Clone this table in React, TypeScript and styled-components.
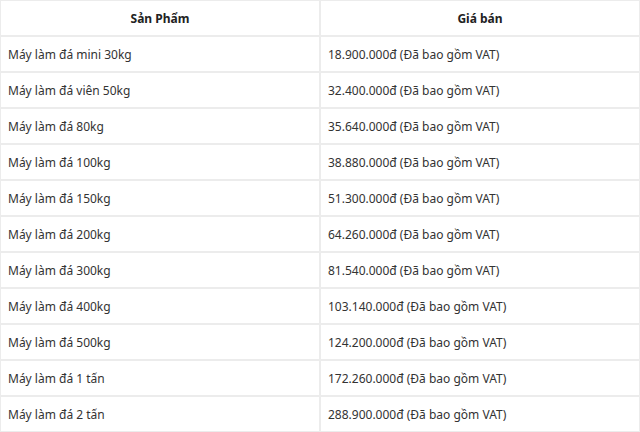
import React from "react";
import styled, { createGlobalStyle } from "styled-components";

const Global = createGlobalStyle`
  html, body { margin: 0; padding: 0; background: #fff; }
  body { font-family: "Noto Sans", "Open Sans", sans-serif; color: #333; overflow: hidden; }
`;

const Table = styled.table`
  width: 642px;
  margin: -1px 0 0 -1px;
  table-layout: fixed;
  border-collapse: collapse;
  font-size: 12px;
`;

const Th = styled.th`
  border: 2px solid #ececec;
  height: 34px;
  padding: 0 7px;
  font-weight: 700;
  text-align: center;
  color: #222;
  vertical-align: middle;
`;

const Td = styled.td`
  border: 2px solid #ececec;
  height: 34px;
  padding: 0 7px;
  text-align: left;
  vertical-align: middle;
`;

const rows: [string, string][] = [
  ["Máy làm đá mini 30kg", "18.900.000đ (Đã bao gồm VAT)"],
  ["Máy làm đá viên 50kg", "32.400.000đ (Đã bao gồm VAT)"],
  ["Máy làm đá 80kg", "35.640.000đ (Đã bao gồm VAT)"],
  ["Máy làm đá 100kg", "38.880.000đ (Đã bao gồm VAT)"],
  ["Máy làm đá 150kg", "51.300.000đ (Đã bao gồm VAT)"],
  ["Máy làm đá 200kg", "64.260.000đ (Đã bao gồm VAT)"],
  ["Máy làm đá 300kg", "81.540.000đ (Đã bao gồm VAT)"],
  ["Máy làm đá 400kg", "103.140.000đ (Đã bao gồm VAT)"],
  ["Máy làm đá 500kg", "124.200.000đ (Đã bao gồm VAT)"],
  ["Máy làm đá 1 tấn", "172.260.000đ (Đã bao gồm VAT)"],
  ["Máy làm đá 2 tấn", "288.900.000đ (Đã bao gồm VAT)"],
];

export default function App() {
  return (
    <>
      <Global />
      <Table>
        <thead>
          <tr>
            <Th>Sản Phẩm</Th>
            <Th>Giá bán</Th>
          </tr>
        </thead>
        <tbody>
          {rows.map(([a, b]) => (
            <tr key={a}>
              <Td>{a}</Td>
              <Td>{b}</Td>
            </tr>
          ))}
        </tbody>
      </Table>
    </>
  );
}
